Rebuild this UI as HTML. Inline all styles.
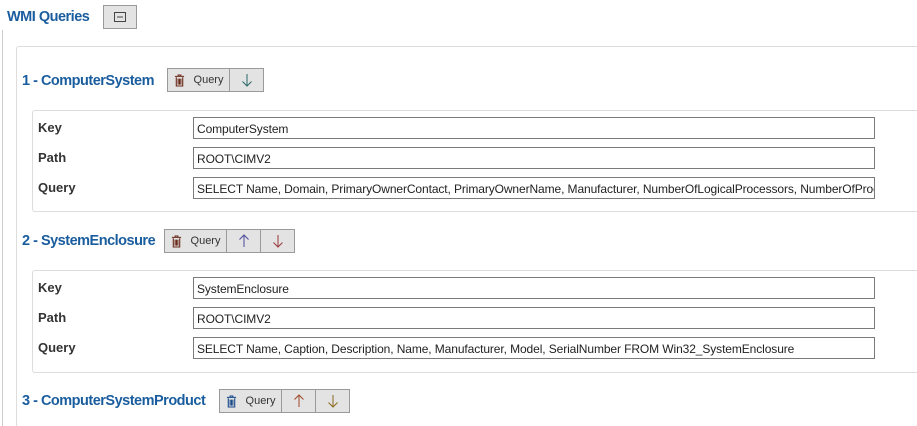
<!DOCTYPE html>
<html><head><meta charset="utf-8"><style>
*{margin:0;padding:0;box-sizing:border-box}
html,body{width:917px;height:426px;overflow:hidden}
body{background:#fff;font-family:"Liberation Sans",sans-serif;position:relative}
.a{position:absolute}
.h{color:#1a5d9e;font-weight:bold;font-size:14.5px;letter-spacing:-0.5px}
.btn{position:absolute;height:24px;background:#e3e3e3;border:1px solid #9a9a9a;display:flex;align-items:center;justify-content:center;font-size:11px;color:#333}
.lbl{position:absolute;left:38px;font-size:13px;font-weight:bold;color:#333}
.in{position:absolute;left:193px;width:682px;height:22px;border:1px solid #7a7a7a;font-size:12px;color:#222;padding:4px 0 0 3px;white-space:nowrap;overflow:hidden;letter-spacing:-0.1px}
.pan{position:absolute;left:32px;width:900px;border:1px solid #ddd;border-right:none;border-radius:3px 0 0 3px}
</style></head><body>
<svg width="0" height="0" style="position:absolute"><defs>
<symbol id="tr" viewBox="0 0 12 14"><path d="M1 2.5h10M4.5 2.5V1h3v1.5M2.5 3.5v9.5h7V3.5M4.5 5v6.5M6 5v6.5M7.5 5v6.5" fill="none" stroke="currentColor" stroke-width="1.2"/></symbol>
<symbol id="dn" viewBox="0 0 12 14"><path d="M6 1v12M1.5 8.5L6 13l4.5-4.5" fill="none" stroke="currentColor" stroke-width="1"/></symbol>
<symbol id="up" viewBox="0 0 12 14"><path d="M6 13V1M1.5 5.5L6 1l4.5 4.5" fill="none" stroke="currentColor" stroke-width="1"/></symbol>
</defs></svg>
<div class="a" style="left:2px;top:30px;width:1px;height:400px;background:#ccc"></div>
<div class="a h" style="left:7px;top:9px">WMI Queries</div>
<div class="btn" style="left:103px;top:5px;width:34px"><svg width="12" height="10"><rect x="0.5" y="0.5" width="11" height="9" fill="none" stroke="#444"/><line x1="3" y1="5" x2="9" y2="5" stroke="#444"/></svg></div>
<div class="a" style="left:16px;top:46px;width:910px;height:400px;border:1px solid #ddd;border-bottom:none;border-radius:3px 0 0 0"></div>

<div class="a h" style="left:22px;top:73px">1 - ComputerSystem</div>
<div class="btn" style="left:167px;top:68px;width:63px"><svg width="11" height="13" style="color:#6a2a1a;margin-right:9px"><use href="#tr"/></svg>Query</div>
<div class="btn" style="left:229px;top:68px;width:35px;color:#2a6a6a"><svg width="12" height="14"><use href="#dn"/></svg></div>
<div class="pan" style="top:110px;height:102px"></div>
<div class="lbl" style="top:120px">Key</div><div class="in" style="top:117px">ComputerSystem</div>
<div class="lbl" style="top:150px">Path</div><div class="in" style="top:147px">ROOT\CIMV2</div>
<div class="lbl" style="top:180px">Query</div><div class="in" style="top:177px">SELECT Name, Domain, PrimaryOwnerContact, PrimaryOwnerName, Manufacturer, NumberOfLogicalProcessors, NumberOfProcessors</div>

<div class="a h" style="left:22px;top:233px">2 - SystemEnclosure</div>
<div class="btn" style="left:164px;top:229px;width:63px"><svg width="11" height="13" style="color:#6a2a1a;margin-right:9px"><use href="#tr"/></svg>Query</div>
<div class="btn" style="left:226px;top:229px;width:35px;color:#4a4a9a"><svg width="12" height="14"><use href="#up"/></svg></div>
<div class="btn" style="left:260px;top:229px;width:35px;color:#9a3a3a"><svg width="12" height="14"><use href="#dn"/></svg></div>
<div class="pan" style="top:270px;height:103px"></div>
<div class="lbl" style="top:280px">Key</div><div class="in" style="top:277px">SystemEnclosure</div>
<div class="lbl" style="top:310px">Path</div><div class="in" style="top:307px">ROOT\CIMV2</div>
<div class="lbl" style="top:340px">Query</div><div class="in" style="top:337px">SELECT Name, Caption, Description, Name, Manufacturer, Model, SerialNumber FROM Win32_SystemEnclosure</div>

<div class="a h" style="left:22px;top:393px">3 - ComputerSystemProduct</div>
<div class="btn" style="left:219px;top:389px;width:63px"><svg width="11" height="13" style="color:#1a4a8a;margin-right:9px"><use href="#tr"/></svg>Query</div>
<div class="btn" style="left:281px;top:389px;width:35px;color:#a04a2a"><svg width="12" height="14"><use href="#up"/></svg></div>
<div class="btn" style="left:315px;top:389px;width:35px;color:#8a6a20"><svg width="12" height="14"><use href="#dn"/></svg></div>
</body></html>
